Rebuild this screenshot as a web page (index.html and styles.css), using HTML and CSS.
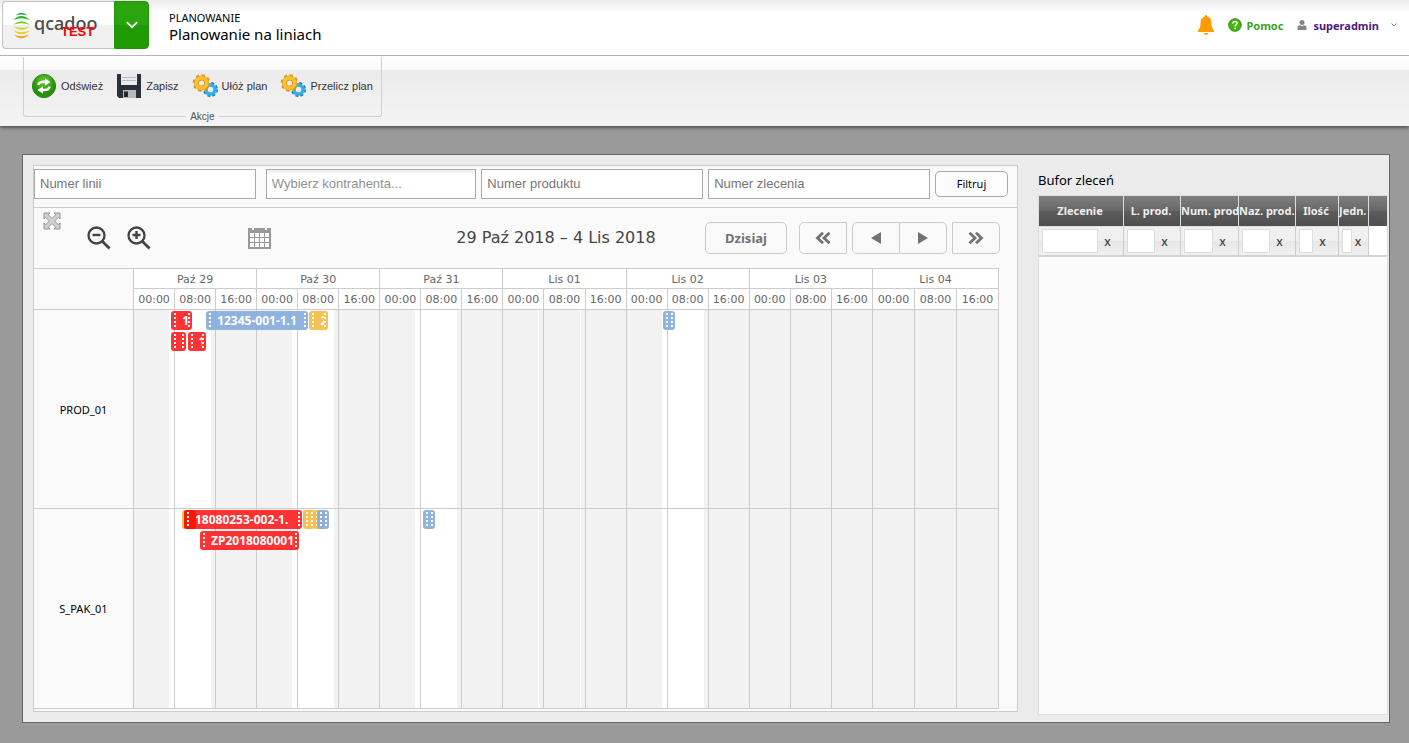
FILE: index.html
```html
<!DOCTYPE html>
<html lang="pl">
<head>
<meta charset="utf-8">
<title>Planowanie na liniach</title>
<link rel="stylesheet" href="styles.css">
</head>
<body>
<header class="topbar">
  <div class="brand">
    <a class="brand-logo" href="#">
      <svg width="17" height="27" viewBox="0 0 17 27" fill="none">
        <path fill="#12a637" d="M2.500 3.600Q8.500-2 14.500 3.600 8.500 1.300 2.500 3.600z"/>
        <path fill="#25b42c" d="M0 8.300Q8.500-.3 17 8.300 8.500 4.200 0 8.300z"/>
        <path fill="#7ccb22" d="M0 12.800Q8.500 5.600 17 12.800 8.500 9.700 0 12.800z"/>
        <path fill="#c3dd1e" d="M0 14.200Q8.500 21.400 17 14.200 8.500 17.300 0 14.200z"/>
        <path fill="#f1cf1c" d="M0 18.200Q8.500 26 17 18.200 8.500 22.300 0 18.200z"/>
        <path fill="#f6a01c" d="M1 22.500Q8.500 30 16 22.500 8.500 26 1 22.500z"/>
      </svg>
      <span class="brand-name">qcadoo</span>
      <span class="brand-env">TEST</span>
    </a>
    <button class="brand-menu" aria-label="Menu">
      <svg width="12" height="8" viewBox="0 0 12 8" fill="none" stroke="#fff" stroke-width="1.800"><path d="M.8 1.200 6 6.200l5.200-5"/></svg>
    </button>
  </div>
  <div class="heading">
    <div class="heading-group">PLANOWANIE</div>
    <h1 class="heading-title">Planowanie na liniach</h1>
  </div>
  <nav class="user-nav">
    <a class="bell" href="#" aria-label="Powiadomienia">
      <svg width="16" height="20" viewBox="0 0 16 20" fill="#ff9c00"><path d="M8 0c.9 0 1.300.6 1.300 1.600C12 2.200 13.300 4.300 13.400 7c.1 4.500.6 6.400 2.600 8.300V17H0v-1.700C2 13.400 2.500 11.500 2.600 7 2.700 4.300 4 2.200 6.700 1.600 6.700.6 7.100 0 8 0zM5.500 18h5c-.4 1.300-1.300 2-2.500 2s-2.100-.7-2.500-2z"/></svg>
    </a>
    <a class="help" href="#">
      <svg width="14" height="14" viewBox="0 0 14 14"><circle cx="7" cy="7" r="6.300" fill="#45b40d" stroke="#3b8f16"/><path d="M4.800 5.500C4.900 3 9.300 3 9.200 5.300 9.100 6.700 7.200 6.700 7.100 8.500" fill="none" stroke="#fff" stroke-width="1.500"/><circle cx="7.100" cy="10.400" r=".9" fill="#fff"/></svg>
      <span>Pomoc</span>
    </a>
    <a class="account" href="#">
      <svg width="10" height="10" viewBox="0 0 10 10" fill="#858585"><circle cx="5" cy="2.600" r="2.500"/><path d="M.5 10V7.500Q.5 5.400 3 5.200 5 6.800 7 5.200 9.500 5.400 9.500 7.500V10z"/></svg>
      <span>superadmin</span>
      <svg class="account-caret" width="6" height="4" viewBox="0 0 6 4" fill="none" stroke="#858585"><path d="M.5.5 3 3 5.500.5"/></svg>
    </a>
  </nav>
</header>

<div class="ribbon">
  <div class="ribbon-group">
    <div class="ribbon-actions">
      <button class="action">
        <svg width="26" height="26" viewBox="0 0 26 26"><defs><radialGradient id="green" cy=".3"><stop offset="0" stop-color="#6ac83b"/><stop offset="1" stop-color="#259008"/></radialGradient></defs><circle cx="13" cy="13" r="11.600" fill="url(#green)" stroke="#2d8a17"/><g fill="none" stroke="#fff" stroke-width="2.400"><path d="M7.300 12Q8 8.500 14.500 8.800"/><path d="M18.700 13.500Q18 17.300 11.500 17"/></g><path fill="#fff" d="M14 5.300 19.500 9 14 12.700zM12 13.300 6.500 17l5.500 3.700z"/></svg>
        Odśwież
      </button>
      <button class="action">
        <svg width="26" height="26" viewBox="0 0 26 26"><path fill="#293039" d="M1 1h24v24H3l-2-2z"/><path fill="#e9ebed" d="M5 1h16v11H5z"/><path stroke="#b9bdc1" d="M6 4.500h14M6 7.500h14"/><path fill="#b7babd" d="M7 17h13v8H7z"/><path fill="#222830" d="M8 18.500h4V24H8z"/></svg>
        Zapisz
      </button>
      <button class="action">
        <svg width="26" height="26" viewBox="0 0 26 26"><g fill="none"><circle cx="18.500" cy="16.500" r="6" stroke="#1579b8" stroke-width="3" stroke-dasharray="2.600 2.112"/><circle cx="18.500" cy="16.500" r="4.500" stroke="#38aeea" stroke-width="3.600"/><circle cx="9.500" cy="10" r="7.200" stroke="#d9991c" stroke-width="3.200" stroke-dasharray="3.100 2.555"/><circle cx="9.500" cy="10" r="5" stroke="#d9921d" stroke-width="4.800"/><circle cx="9.500" cy="10" r="5.200" stroke="#fac030" stroke-width="3.800"/></g></svg>
        Ułóż plan
      </button>
      <button class="action">
        <svg width="26" height="26" viewBox="0 0 26 26"><g fill="none"><circle cx="18.500" cy="16.500" r="6" stroke="#1579b8" stroke-width="3" stroke-dasharray="2.600 2.112"/><circle cx="18.500" cy="16.500" r="4.500" stroke="#38aeea" stroke-width="3.600"/><circle cx="9.500" cy="10" r="7.200" stroke="#d9991c" stroke-width="3.200" stroke-dasharray="3.100 2.555"/><circle cx="9.500" cy="10" r="5" stroke="#d9921d" stroke-width="4.800"/><circle cx="9.500" cy="10" r="5.200" stroke="#fac030" stroke-width="3.800"/></g></svg>
        Przelicz plan
      </button>
    </div>
    <div class="ribbon-label">Akcje</div>
  </div>
</div>

<main class="panel">
  <section class="planner">
    <form class="filters">
      <input class="field field-line" type="text" placeholder="Numer linii" aria-label="Numer linii">
      <input class="field field-contractor" type="text" placeholder="Wybierz kontrahenta..." aria-label="Wybierz kontrahenta">
      <input class="field" type="text" placeholder="Numer produktu" aria-label="Numer produktu">
      <input class="field" type="text" placeholder="Numer zlecenia" aria-label="Numer zlecenia">
      <button class="filter-button" type="button">Filtruj</button>
    </form>
    <div class="calendar-bar">
      <button class="tool tool-expand" aria-label="Pełny ekran">
        <svg width="18" height="18" viewBox="0 0 18 18"><path d="M1 1h6L5.300 2.800 9 6.400l3.700-3.600L11 1h6v6l-1.800-1.700L11.600 9l3.600 3.700L17 11v6h-6l1.700-1.800L9 11.600l-3.700 3.600L7 17H1v-6l1.800 1.700L6.400 9 2.800 5.300 1 7z" fill="#d0d0d0" stroke="#949494"/></svg>
      </button>
      <button class="tool" aria-label="Pomniejsz">
        <svg width="24" height="24" viewBox="0 0 24 24" fill="none" stroke="#444"><circle cx="9.500" cy="9.500" r="8" stroke-width="2.300"/><path d="m15 15 7.500 7.500" stroke-width="2.800"/><path d="M5.500 9h8" stroke-width="2.400"/></svg>
      </button>
      <button class="tool" aria-label="Powiększ">
        <svg width="24" height="24" viewBox="0 0 24 24" fill="none" stroke="#444"><circle cx="9.500" cy="9.500" r="8" stroke-width="2.300"/><path d="m15 15 7.500 7.500" stroke-width="2.800"/><path d="M5.500 9h8m-4-4v8" stroke-width="2.400"/></svg>
      </button>
      <button class="tool tool-date" aria-label="Kalendarz">
        <svg width="23" height="22" viewBox="0 0 23 22"><path fill="#999" d="M0 1h4v2h2V1h11v2h2V1h4v21H0z"/><path fill="#fff" d="M2 6h4v4H2zm5 0h4v4H7zm5 0h4v4h-4zm5 0h4v4h-4zM2 11h4v4H2zm5 0h4v4H7zm5 0h4v4h-4zm5 0h4v4h-4zM2 16h4v4H2zm5 0h4v4H7zm5 0h4v4h-4zm5 0h4v4h-4z"/></svg>
      </button>
      <h2 class="range">29 Paź 2018 – 4 Lis 2018</h2>
      <div class="calendar-nav">
        <button class="nav-button nav-today">Dzisiaj</button>
        <button class="nav-button nav-first" aria-label="Wstecz o okres"><svg width="16" height="12" viewBox="0 0 16 12" fill="none" stroke="#727272" stroke-width="2.800"><path d="M8 .8 2.500 6 8 11.200M14.500.8 9 6l5.500 5.200"/></svg></button>
        <div class="nav-pair">
          <button class="nav-button nav-prev" aria-label="Poprzedni"><svg width="10" height="12" viewBox="0 0 10 12" fill="#727272"><path d="M10 0v12L0 6z"/></svg></button>
          <button class="nav-button nav-next" aria-label="Następny"><svg width="10" height="12" viewBox="0 0 10 12" fill="#727272"><path d="M0 0v12l10-6z"/></svg></button>
        </div>
        <button class="nav-button nav-last" aria-label="Naprzód o okres"><svg width="16" height="12" viewBox="0 0 16 12" fill="none" stroke="#727272" stroke-width="2.800"><path d="M8 .8 13.500 6 8 11.200M1.500.8 7 6l-5.500 5.200"/></svg></button>
      </div>
    </div>
    <table class="timeline">
      <colgroup><col class="col-line"><col span="18"><col class="col-last" span="3"></colgroup>
      <thead>
        <tr><td rowspan="2"></td><th colspan="3">Paź 29</th><th colspan="3">Paź 30</th><th colspan="3">Paź 31</th><th colspan="3">Lis 01</th><th colspan="3">Lis 02</th><th colspan="3">Lis 03</th><th colspan="3">Lis 04</th></tr>
        <tr><th>00:00</th><th>08:00</th><th>16:00</th><th>00:00</th><th>08:00</th><th>16:00</th><th>00:00</th><th>08:00</th><th>16:00</th><th>00:00</th><th>08:00</th><th>16:00</th><th>00:00</th><th>08:00</th><th>16:00</th><th>00:00</th><th>08:00</th><th>16:00</th><th>00:00</th><th>08:00</th><th>16:00</th></tr>
      </thead>
      <tbody>
        <tr>
          <th scope="row">PROD_01</th>
          <td class="night"></td><td class="shift"></td><td></td><td class="night"></td><td class="shift"></td><td></td><td class="night"></td><td class="shift"></td><td></td><td class="seam"></td><td class="seam"></td><td></td><td class="night"></td><td class="shift"></td><td></td><td></td><td></td><td></td><td></td><td></td>
          <td class="lane">
            <div class="events">
              <div class="event red" style="left:4.300%;width:2.430%"><span>12345</span></div>
              <div class="event blue" style="left:8.350%;width:11.800%"><span>12345-001-1.1</span></div>
              <div class="event gold" style="left:20.300%;width:2.200%"><span>2018</span></div>
              <div class="event blue" style="left:61.270%;width:1.390%"></div>
              <div class="event red second" style="left:4.300%;width:1.740%"><span>1</span></div>
              <div class="event red second" style="left:6.200%;width:2.080%"><span>12345</span></div>
            </div>
          </td>
        </tr>
        <tr>
          <th scope="row">S_PAK_01</th>
          <td class="night"></td><td class="shift"></td><td></td><td class="night"></td><td class="shift"></td><td></td><td class="night"></td><td class="shift"></td><td></td><td class="seam"></td><td class="seam"></td><td></td><td class="night"></td><td class="shift"></td><td></td><td></td><td></td><td></td><td></td><td></td>
          <td class="lane">
            <div class="events">
              <div class="event gold" style="left:5.550%;width:1.390%"></div>
              <div class="event red" style="left:5.780%;width:13.660%"><span>18080253-002-1.</span></div>
              <div class="event deep" style="left:5.780%;width:1.390%"></div>
              <div class="event gold" style="left:19.560%;width:1.390%"></div>
              <div class="event gold" style="left:20.700%;width:1.300%"></div>
              <div class="event blue" style="left:21.180%;width:1.390%"></div>
              <div class="event blue" style="left:33.450%;width:1.390%"></div>
              <div class="event red second" style="left:7.640%;width:11.460%"><span>ZP2018080001</span></div>
            </div>
          </td>
        </tr>
      </tbody>
    </table>
  </section>

  <section class="buffer">
    <h2 class="buffer-title">Bufor zleceń</h2>
    <div class="buffer-grid">
      <table class="buffer-table">
        <colgroup><col class="w-order"><col class="w-line"><col class="w-number"><col class="w-name"><col class="w-qty"><col class="w-unit"><col></colgroup>
        <thead>
          <tr><th>Zlecenie</th><th>L. prod.</th><th>Num. prod.</th><th>Naz. prod.</th><th>Ilość</th><th>Jedn.</th><th></th></tr>
          <tr>
            <td><div class="search"><input type="text" aria-label="Zlecenie"><button>x</button></div></td>
            <td><div class="search"><input type="text" aria-label="L. prod."><button>x</button></div></td>
            <td><div class="search"><input type="text" aria-label="Num. prod."><button>x</button></div></td>
            <td><div class="search"><input type="text" aria-label="Naz. prod."><button>x</button></div></td>
            <td><div class="search"><input type="text" aria-label="Ilość"><button>x</button></div></td>
            <td><div class="search search-narrow"><input type="text" aria-label="Jedn."><button>x</button></div></td>
            <td class="spare"></td>
          </tr>
        </thead>
      </table>
    </div>
  </section>
</main>
</body>
</html>
```
FILE: styles.css
```css
* { box-sizing: border-box; }

body {
  margin: 0;
  min-height: 100vh;
  display: flex;
  flex-direction: column;
  background: #9a9a9a;
  font-family: "Noto Sans", "Open Sans", sans-serif;
  font-size: 11px;
  color: #000;
}

button { font-family: inherit; cursor: pointer; }
a { text-decoration: none; }
svg { display: block; flex: none; }

/* Top bar */
.topbar {
  display: flex;
  align-items: flex-start;
  height: 56px;
  padding: 1px 12px 0 2px;
  border-bottom: 1px solid #b4b4b4;
  background: linear-gradient(#ececec, #fff 13px);
}
.brand { display: flex; height: 48px; }
.brand-logo {
  position: relative;
  display: flex;
  align-items: center;
  gap: 4px;
  width: 112px;
  padding-left: 10px;
  border: 1px solid #c4c4c4;
  border-right: 0;
  border-radius: 4px 0 0 4px;
  background: linear-gradient(#fff 50%, #f1f1f1 50%);
}
.brand-name { padding-bottom: 4px; font-size: 18px; font-weight: 500; line-height: 24px; color: #4a4a4a; }
.brand-env {
  position: absolute;
  left: 58px;
  top: 22px;
  font: bold 13px/15px "Liberation Sans", sans-serif;
  color: #f00;
}
.brand-menu {
  display: flex;
  align-items: center;
  justify-content: center;
  width: 35px;
  padding: 0;
  border: 1px solid #249307;
  border-radius: 0 4px 4px 0;
  background: linear-gradient(#2ba50e 50%, #209a02 50%);
}
.heading { padding: 9px 0 0 20px; }
.heading-group { line-height: 15px; }
.heading-title { margin: 0; font-size: 15px; font-weight: 400; line-height: 19px; }

.user-nav {
  display: flex;
  align-items: center;
  gap: 14px;
  margin-left: auto;
  height: 48px;
  font-weight: 700;
}
.help, .account { display: flex; align-items: center; gap: 4px; }
.help { color: #37a520; }
.account { gap: 6px; color: #4b1a82; }
.account-caret { margin-left: 6px; }

/* Ribbon */
.ribbon {
  height: 70px;
  padding: 1px 23px 0;
  background: linear-gradient(#fff, #f9f9f9 14px, #ebebeb 14px, #f4f4f4);
  box-shadow: 0 1px 4px #333;
  clip-path: inset(0 0 -8px 0);
}
.ribbon-group {
  position: relative;
  width: fit-content;
  height: 60px;
  padding: 16px 8px 0 7px;
  border: 1px solid #d0d0d0;
  border-top: 0;
  border-radius: 0 0 3px 3px;
}
.ribbon-actions { display: flex; gap: 13px; }
.action {
  display: flex;
  align-items: center;
  gap: 4px;
  padding: 0;
  border: 0;
  background: none;
  font: 11px/26px "Liberation Sans", sans-serif;
  color: #333;
}
.ribbon-label {
  position: absolute;
  left: 50%;
  bottom: -7px;
  transform: translateX(-50%);
  padding: 0 4px;
  background: #f3f3f3;
  font: 10px/13px "Liberation Sans", sans-serif;
  color: #555;
}

/* Main panel */
.panel {
  flex: 1;
  display: flex;
  align-items: stretch;
  gap: 20px;
  margin: 28px 19px 20px 22px;
  padding: 10px 1px 7px 10px;
  border: 1px solid #666;
  background: #ebebeb;
}
.planner {
  flex: 1;
  min-width: 0;
  margin-bottom: 3px;
  border: 1px solid #ccc;
  background: #fafafa;
}
.filters {
  display: flex;
  align-items: center;
  gap: 5px;
  height: 42px;
  padding: 0 9px 5px 0;
  border-bottom: 1px solid #ccc;
}
.field {
  flex: 222 1 0;
  min-width: 0;
  height: 30px;
  padding: 0 5px 2px;
  border: 1px solid #aaa;
  background: #fff;
  font: 13px/16px "Liberation Sans", sans-serif;
}
.field::placeholder { color: #757575; opacity: 1; }
.field-line { margin-right: 5px; }
.field-contractor { flex-grow: 210; background: linear-gradient(#eee, #fff 5px); }
.field-contractor::placeholder { color: #909090; }
.filter-button {
  width: 73px;
  height: 26px;
  padding: 0 0 1px;
  border: 1px solid #aaa;
  border-radius: 5px;
  background: #fcfcfc;
  font-size: 11px;
}

.calendar-bar {
  display: flex;
  align-items: center;
  height: 60px;
  padding: 0 17px 0 9px;
}
.tool { display: flex; padding: 0; border: 0; background: none; margin-right: 16px; }
.tool-expand { align-self: flex-start; margin: 4px 26px 0 0; }
.tool-date { margin: 0 0 0 81px; }
.range {
  flex: 1;
  margin: 0;
  padding-left: 170px;
  text-align: center;
  font: 16px/20px "DejaVu Sans", sans-serif;
  color: #444;
  white-space: nowrap;
}
.calendar-nav { display: flex; gap: 5px; margin-left: 34px; }
.nav-button {
  display: flex;
  align-items: center;
  justify-content: center;
  width: 48px;
  height: 32px;
  padding: 0;
  border: 1px solid #ccc;
  background: #fafafa;
}
.nav-today {
  width: 82px;
  margin-right: 7px;
  border-radius: 5px;
  font-size: 13px;
  font-weight: 700;
  color: #727272;
}
.nav-first { border-radius: 5px 0 0 5px; }
.nav-last { border-radius: 0 5px 5px 0; }
.nav-pair { display: flex; }
.nav-prev { border-radius: 5px 0 0 5px; }
.nav-next { border-left: 0; border-radius: 0 5px 5px 0; width: 47px; }

/* Timeline */
.timeline {
  position: relative;
  width: calc(100% - 18px);
  border-collapse: separate;
  border-spacing: 0;
  table-layout: fixed;
  border-top: 1px solid #ccc;
  border-right: 1px solid #ccc;
}
.col-line { width: 99px; }
.col-last { width: 42px; }
.timeline th, .timeline td { padding: 0; border-left: 1px solid #ccc; border-bottom: 1px solid #ccc; }
.timeline tr > :first-child[rowspan], .timeline th[scope] { border-left: 0; }
.timeline thead th {
  height: 20px;
  padding-top: 1px;
  background: #fff;
  font: 11px/15px "DejaVu Sans", sans-serif;
  color: #666;
}
.timeline thead tr + tr th { height: 21px; padding-top: 0; }
.timeline th[scope] { height: 199px; font-weight: 400; background: #fafafa; }
.timeline tbody tr + tr th[scope] { height: 200px; }
.timeline tbody td { background: #f2f2f2; }
.timeline tbody .night { background: linear-gradient(90deg, #f2f2f2 88%, #fff 88%); }
.timeline tbody .shift { background: linear-gradient(90deg, #fff 90%, #f2f2f2 90%); }
.timeline tbody .seam { background: linear-gradient(90deg, #f2f2f2 88%, #fff 88%, #fff 91%, #f2f2f2 91%); }
.timeline tbody .lane { vertical-align: top; }

.events { position: absolute; left: 100px; right: 0; height: 0; }
.event {
  position: absolute;
  top: 1px;
  height: 19px;
  overflow: hidden;
  border-radius: 3px;
  opacity: .93;
  font-size: 12px;
  font-weight: 700;
  line-height: 19px;
  color: #fff;
  white-space: nowrap;
}
.event::before, .event::after {
  content: "";
  position: absolute;
  top: 2px;
  bottom: 1px;
  width: 2px;
  background: repeating-linear-gradient(#fff 0 2px, transparent 2px 4px);
}
.event::before { left: 3px; }
.event::after { right: 2px; }
.event.second { top: 22px; }
.event span { display: block; overflow: hidden; margin: 0 4px 0 11px; }
.red { background: #ff2424; }
.deep { background: #f51800; }
.event.deep::after { display: none; }
.blue { background: #89aede; }
.gold { background: #f8bd46; }

/* Order buffer */
.buffer { display: flex; flex-direction: column; width: 350px; }
.buffer-title { margin: 5px 0 4px; font-size: 13px; font-weight: 400; line-height: 21px; }
.buffer-grid { flex: 1; border: 1px solid #ddd; background: #fbfbfb; }
.buffer-table { width: 100%; table-layout: fixed; border-collapse: separate; border-spacing: 0; }
.w-order { width: 85px; }
.w-line { width: 57px; }
.w-number { width: 58px; }
.w-name { width: 57px; }
.w-qty { width: 43px; }
.w-unit { width: 30px; }
.buffer-table th {
  height: 30px;
  padding: 0 2px 2px 0;
  overflow: hidden;
  border-right: 1px solid #ddd;
  background: linear-gradient(#808080, #666 50%, #5c5c5c 50%, #4f4f4f);
  font-size: 11px;
  color: #eee;
  white-space: nowrap;
}
.buffer-table td {
  height: 31px;
  padding: 0;
  border-right: 1px solid #ccc;
  border-top: 1px solid #ddd;
  border-bottom: 2px solid #d4d4d4;
  background: linear-gradient(#f0f0f0 50%, #e6e6e6 50%, #f0f0f0);
}
.buffer-table th:last-child, .buffer-table td:last-child { border-right: 0; }
.buffer-table .spare { background: #fff; border-top: 0; }
.search { display: flex; align-items: center; padding: 0 6px 0 3px; }
.search input {
  flex: 1;
  min-width: 0;
  height: 24px;
  padding: 0;
  border: 1px solid #ddd;
  background: #fff;
}
.search button {
  width: 19px;
  padding: 0;
  border: 0;
  background: none;
  font-size: 12px;
  font-weight: 500;
  color: #444;
}
.search-narrow { padding-right: 4px; }
.search-narrow button { width: 12px; }
```
